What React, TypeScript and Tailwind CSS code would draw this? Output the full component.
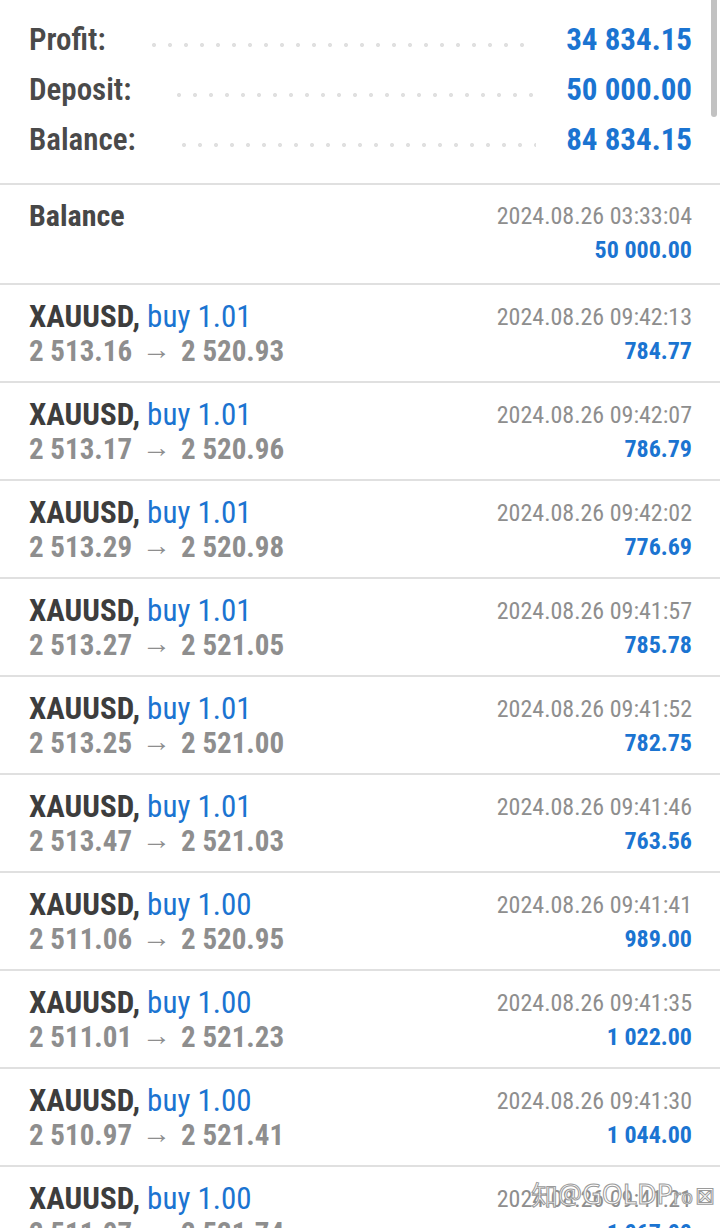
const summary = [
  { label: "Profit:", value: "34 834.15" },
  { label: "Deposit:", value: "50 000.00" },
  { label: "Balance:", value: "84 834.15" },
];

const trades = [
  { time: "09:42:13", lot: "1.01", open: "2 513.16", close: "2 520.93", profit: "784.77" },
  { time: "09:42:07", lot: "1.01", open: "2 513.17", close: "2 520.96", profit: "786.79" },
  { time: "09:42:02", lot: "1.01", open: "2 513.29", close: "2 520.98", profit: "776.69" },
  { time: "09:41:57", lot: "1.01", open: "2 513.27", close: "2 521.05", profit: "785.78" },
  { time: "09:41:52", lot: "1.01", open: "2 513.25", close: "2 521.00", profit: "782.75" },
  { time: "09:41:46", lot: "1.01", open: "2 513.47", close: "2 521.03", profit: "763.56" },
  { time: "09:41:41", lot: "1.00", open: "2 511.06", close: "2 520.95", profit: "989.00" },
  { time: "09:41:35", lot: "1.00", open: "2 511.01", close: "2 521.23", profit: "1 022.00" },
  { time: "09:41:30", lot: "1.00", open: "2 510.97", close: "2 521.41", profit: "1 044.00" },
  { time: "09:41:21", lot: "1.00", open: "2 511.07", close: "2 521.74", profit: "1 067.00" },
];

export default function App() {
  return (
    <div className="relative h-[1228px] w-[720px] overflow-hidden bg-white font-['Roboto',sans-serif] font-stretch-condensed">
      {/* totals */}
      <div className="px-[28px] pt-[15px] pb-[18px] pl-[29px]">
        {summary.map((row) => (
          <div key={row.label} className="flex h-[50px] items-center">
            <span className="text-[31px] font-semibold text-[#4a4a4a]">{row.label}</span>
            <div className="mt-[10px] mr-[30px] ml-[40px] h-[6px] flex-1 bg-[radial-gradient(circle,#e0e0e0_1.8px,transparent_2.3px)] bg-[length:16px_6px] bg-repeat-x" />
            <span className="text-[31px] font-bold text-[#1b74d1]">{row.value}</span>
          </div>
        ))}
      </div>

      {/* deposit entry */}
      <div className="flex h-[100px] justify-between border-t-2 border-[#e0e0e0] pt-[14px] pr-[28px] pl-[29px]">
        <span className="text-[30px] leading-[34px] font-bold text-[#474747]">Balance</span>
        <div className="flex flex-col items-end">
          <span className="text-[24px] leading-[34px] text-[#8e8e8e]">2024.08.26 03:33:04</span>
          <span className="text-[24px] leading-[34px] font-bold text-[#1b74d1]">50 000.00</span>
        </div>
      </div>

      {trades.map((t) => (
        <div
          key={t.time}
          className="flex h-[98px] justify-between border-t-2 border-[#e0e0e0] pt-[15px] pr-[28px] pl-[29px]"
        >
          <div className="flex flex-col">
            <span className="text-[31px] leading-[34px]">
              <span className="font-bold text-[#3d3d3d]">XAUUSD,</span>{" "}
              <span className="text-[#1b74d1]">buy {t.lot}</span>
            </span>
            <span className="text-[29px] leading-[34px] font-bold text-[#8e8e8e]">
              {t.open}
              <span className="relative -top-[2px] mx-[10px] font-normal">→</span>
              {t.close}
            </span>
          </div>
          <div className="flex flex-col items-end">
            <span className="text-[24px] leading-[34px] text-[#8e8e8e]">2024.08.26 {t.time}</span>
            <span className="text-[24px] leading-[34px] font-bold text-[#1b74d1]">{t.profit}</span>
          </div>
        </div>
      ))}

      {/* scrollbar */}
      <div className="absolute top-0 right-[3px] h-[117px] w-[6px] rounded-b-sm bg-[#c2c2c2]" />

      {/* watermark */}
      <div className="absolute right-[5px] bottom-[21px] flex items-end font-['Noto_Sans',sans-serif] text-[27px] leading-none text-white [-webkit-text-stroke:1px_#9a9a9a]">
        <span>知@GOLDP</span>
        <span className="text-[20px]">ro</span>
        <span className="ml-[2px] text-[24px]">⊠</span>
      </div>
    </div>
  );
}
